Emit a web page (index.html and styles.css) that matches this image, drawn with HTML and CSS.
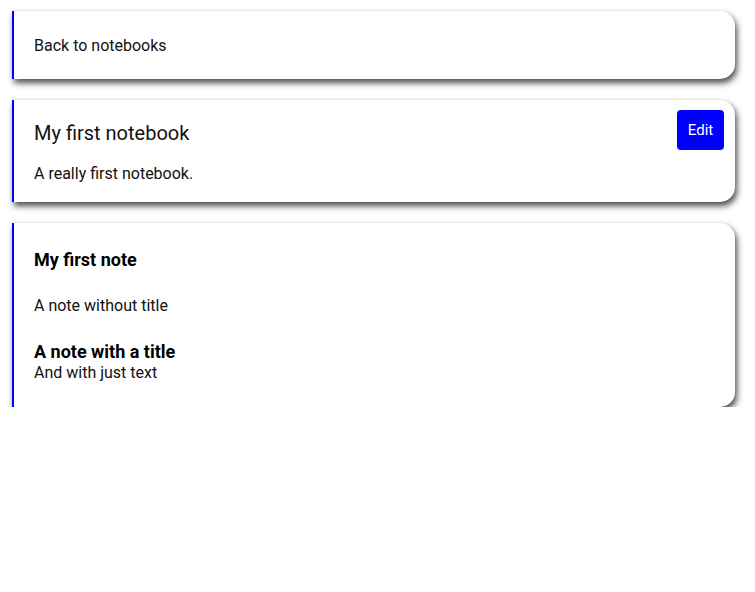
FILE: index.html
```html
<!DOCTYPE html>
<html>
<head>
<meta charset="utf-8">
<link rel="stylesheet" href="styles.css">
</head>
<body>
<div class="page">
  <div class="card card-back">
    <span class="back-link">Back to notebooks</span>
  </div>
  <div class="card card-notebook">
    <div class="nb-header">
      <h2 class="nb-title">My first notebook</h2>
      <button class="edit-btn">Edit</button>
    </div>
    <p class="nb-desc">A really first notebook.</p>
  </div>
  <div class="card card-notes">
    <div class="note">
      <h3 class="note-title">My first note</h3>
    </div>
    <div class="note">
      <p class="note-text">A note without title</p>
    </div>
    <div class="note">
      <h3 class="note-title">A note with a title</h3>
      <p class="note-text">And with just text</p>
    </div>
  </div>
</div>
</body>
</html>
```
FILE: styles.css
```css
html, body {
  margin: 0;
  padding: 0;
  background: #fff;
}
body {
  font-family: Roboto, "Liberation Sans", sans-serif;
  color: #111;
}
.page {
  display: flex;
  flex-direction: column;
  gap: 21px;
  padding: 11px 20px 0 12px;
}
.card {
  background: #fff;
  border-left: 2px solid #0000ff;
  border-radius: 0 15px 15px 0;
  box-shadow: 2px 4px 6px rgba(0, 0, 0, 0.7), 0 -1px 3px rgba(0, 0, 0, 0.05);
  padding: 0 11px 0 20px;
}
.card-back {
  height: 68px;
  display: flex;
  align-items: center;
  font-size: 16px;
}
.back-link {
  line-height: 20px;
  margin-top: 2px;
}
.card-notebook {
  padding-top: 10px;
  padding-bottom: 18px;
}
.nb-header {
  display: flex;
  align-items: center;
  justify-content: space-between;
  height: 40px;
}
.nb-title {
  margin: 5px 0 0 0;
  font-size: 20px;
  font-weight: 400;
  line-height: 24px;
}
.edit-btn {
  background: #0000ff;
  color: #fff;
  border: none;
  border-radius: 4px;
  width: 47px;
  height: 40px;
  font-family: Roboto, "Liberation Sans", sans-serif;
  font-size: 15px;
  padding: 0;
}
.nb-desc {
  margin: 14px 0 0 0;
  font-size: 16px;
  line-height: 20px;
}
.card-notes {
  padding-top: 26px;
  padding-bottom: 24px;
  display: flex;
  flex-direction: column;
  gap: 25px;
}
.note-title {
  margin: 0;
  font-size: 18px;
  font-weight: 700;
  line-height: 22px;
  color: #000;
}
.note-text {
  margin: 0;
  font-size: 16px;
  line-height: 20px;
}
```
